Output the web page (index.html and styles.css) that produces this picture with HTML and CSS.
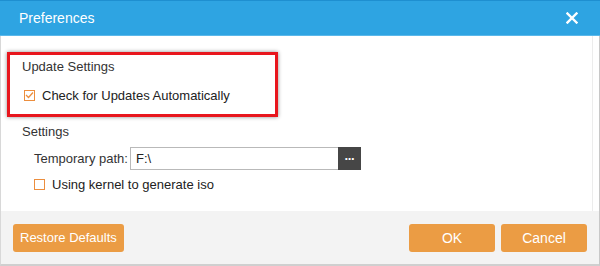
FILE: index.html
```html
<!DOCTYPE html>
<html lang="en">
<head>
    <meta charset="UTF-8">
    <title>Preferences</title>
    <link rel="stylesheet" href="styles.css">
</head>
<body>
    <div class="dialog">
        <div class="titlebar">
            <span class="judul">Preferences</span>
            <button class="tutup" aria-label="Close">
                <svg width="12" height="12" viewBox="0 0 12 12">
                    <path d="M1.5 1.5 L10.5 10.5 M10.5 1.5 L1.5 10.5" stroke="#fff" stroke-width="2.4" stroke-linecap="square"/>
                </svg>
            </button>
        </div>

        <div class="isi">
            <div class="grup">
                <div class="label-grup">Update Settings</div>
                <label class="baris-cek">
                    <span class="kotak dicentang">
                        <svg width="9" height="8" viewBox="0 0 9 8">
                            <path d="M1 4 L3.5 6.5 L8 1.5" fill="none" stroke="#ec8e3e" stroke-width="1.3"/>
                        </svg>
                    </span>
                    Check for Updates Automatically
                </label>
            </div>

            <div class="grup">
                <div class="label-grup">Settings</div>
                <div class="baris-path">
                    <span class="label-path">Temporary path:</span>
                    <span class="input-path">F:\</span>
                    <button class="browse">&middot;&middot;&middot;</button>
                </div>
                <label class="baris-cek sub">
                    <span class="kotak"></span>
                    Using kernel to generate iso
                </label>
            </div>

            <div class="sorotan"></div>
        </div>

        <div class="footer">
            <button class="tombol">Restore Defaults</button>
            <div class="kanan">
                <button class="tombol lebar">OK</button>
                <button class="tombol lebar">Cancel</button>
            </div>
        </div>
    </div>
</body>
</html>
```

FILE: styles.css
```css
body {
    margin: 0;
    font-family: "Liberation Sans", Arial, sans-serif;
    font-size: 13px;
    color: #333;
    background: #fff;
}

.dialog {
    width: 600px;
    height: 266px;
    display: flex;
    flex-direction: column;
    box-sizing: border-box;
    border-left: 1px solid #d8d8d8;
    border-right: 1px solid #c8c8c8;
    border-bottom: 2px solid #cfcfcf;
}

.titlebar {
    height: 36px;
    flex-shrink: 0;
    display: flex;
    align-items: center;
    justify-content: space-between;
    background-color: #2ea4e2;
    border-top: 1px solid #1e8fd0;
    border-bottom: 1px solid #5bb8ea;
    box-sizing: border-box;
    padding: 0 22px 0 19px;
    margin: 0 -1px;
}

.judul {
    color: #fff;
    font-size: 14px;
}

.tutup {
    background: none;
    border: none;
    padding: 0;
    display: flex;
    cursor: pointer;
}

.isi {
    position: relative;
    flex: 1;
    padding: 22px 0 0 21px;
    margin-right: 6px;
    border-right: 1px solid #ececec;
}

.grup {
    display: flex;
    flex-direction: column;
}

.grup + .grup {
    margin-top: 19px;
}

.label-grup {
    height: 18px;
    line-height: 18px;
}

.baris-cek {
    display: flex;
    align-items: center;
    gap: 7px;
    height: 18px;
    margin-top: 10px;
    padding-left: 2px;
    color: #222;
}

.baris-cek.sub {
    margin-top: 5px;
    padding-left: 12px;
}

.kotak {
    width: 9px;
    height: 9px;
    border: 1px solid #ec8e3e;
    display: flex;
    align-items: center;
    justify-content: center;
    background: #fff;
}

.baris-path {
    display: flex;
    align-items: center;
    margin-top: 6px;
    padding-left: 12px;
}

.label-path {
    margin-right: 2px;
}

.input-path {
    width: 202px;
    height: 21px;
    line-height: 21px;
    border: 1px solid #b9b9b9;
    border-right: none;
    padding-left: 5px;
    color: #222;
}

.browse {
    width: 23px;
    height: 23px;
    border: none;
    background-color: #464646;
    color: #fff;
    font-size: 13px;
    font-weight: bold;
    padding: 0;
    letter-spacing: -1px;
}

.sorotan {
    position: absolute;
    left: 6px;
    top: 16px;
    width: 265px;
    height: 59px;
    border: 3px solid #e8161d;
    box-shadow: 0 0 4px rgba(0, 0, 0, 0.45);
}

.footer {
    height: 53px;
    flex-shrink: 0;
    display: flex;
    align-items: center;
    justify-content: space-between;
    background-color: #f3f3f3;
    padding: 0 12px 0 12px;
    box-sizing: border-box;
}

.kanan {
    display: flex;
    gap: 6px;
}

.tombol {
    height: 28px;
    padding: 0 7px;
    border: none;
    border-radius: 3px;
    background-color: #eb9c44;
    color: #fff;
    font-family: "Liberation Sans", Arial, sans-serif;
    font-size: 13px;
    cursor: pointer;
}

.tombol.lebar {
    width: 86px;
    font-size: 14px;
}
```
